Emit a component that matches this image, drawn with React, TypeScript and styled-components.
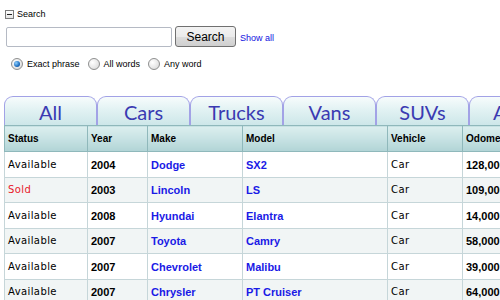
import styled, { createGlobalStyle } from "styled-components";

const GlobalStyle = createGlobalStyle`
  html, body { margin: 0; padding: 0; background: #fff; }
  body { font-family: "Liberation Sans", Arial, sans-serif; overflow: hidden; }
`;

const Page = styled.div`
  width: 500px;
  height: 300px;
  overflow: hidden;
`;

const SearchPanel = styled.div`
  display: flex;
  flex-direction: column;
  padding: 9px 0 0 5px;
`;

const TitleRow = styled.div`
  display: flex;
  align-items: center;
  gap: 3px;
  font-size: 9px;
  color: #000;
  height: 10px;
`;

const MinusBox = styled.span`
  width: 7px;
  height: 7px;
  border: 1px solid #7a7a7a;
  background: linear-gradient(#fff, #e4e4e4);
  position: relative;
  &::after {
    content: "";
    position: absolute;
    left: 1px;
    right: 1px;
    top: 3px;
    height: 1px;
    background: #222;
  }
`;

const SearchRow = styled.div`
  display: flex;
  align-items: center;
  margin-top: 7px;
  padding-left: 1px;
`;

const TextInput = styled.input`
  box-sizing: border-box;
  width: 166px;
  height: 20px;
  border: 1px solid #b5bac4;
  border-radius: 2px;
  padding: 0 3px;
  outline: none;
`;

const Button = styled.button`
  box-sizing: border-box;
  width: 61px;
  height: 21px;
  margin-left: 3px;
  border: 1px solid #707070;
  border-radius: 3px;
  background: linear-gradient(#f3f3f3 0%, #ebebeb 50%, #dddddd 51%, #cfcfcf 100%);
  font-family: "Liberation Sans", Arial, sans-serif;
  font-size: 12px;
  color: #000;
  padding: 0;
`;

const ShowAll = styled.a`
  margin-left: 4px;
  margin-top: 3px;
  font-size: 9px;
  color: #1010e0;
  text-decoration: none;
`;

const RadioRow = styled.div`
  display: flex;
  align-items: center;
  margin-top: 11px;
  padding-left: 6px;
  font-size: 9px;
`;

const RadioLabel = styled.label`
  display: flex;
  align-items: center;
  gap: 4px;
  margin-right: 8px;
`;

const RadioDot = styled.span<{ $checked?: boolean }>`
  box-sizing: border-box;
  width: 12px;
  height: 12px;
  border-radius: 50%;
  border: 1px solid #8e8f8f;
  background: radial-gradient(circle at 35% 35%, #fff 0%, #e6e6e6 60%, #cfcfcf 100%);
  display: flex;
  align-items: center;
  justify-content: center;
  &::after {
    content: "";
    display: ${(p) => (p.$checked ? "block" : "none")};
    width: 6px;
    height: 6px;
    border-radius: 50%;
    background: radial-gradient(circle at 35% 35%, #8fd0ff 0%, #1f6fc0 60%, #0b3f80 100%);
  }
`;

const TabStrip = styled.div`
  display: flex;
  margin-top: 26px;
  padding-left: 4px;
  width: 700px;
`;

const Tab = styled.div`
  box-sizing: border-box;
  flex: 0 0 auto;
  width: 93px;
  height: 29px;
  border: 1px solid #a2a2e6;
  border-bottom: none;
  border-radius: 9px 9px 0 0;
  background: linear-gradient(#f7fcfc 0%, #e2f2f3 45%, #cde7e9 100%);
  display: flex;
  align-items: center;
  justify-content: center;
  font-family: Lato, "Open Sans", sans-serif;
  font-size: 20px;
  color: #3a3ab2;
  padding-top: 2px;
`;

const TableWrap = styled.div`
  padding-left: 4px;
  width: 700px;
`;

const Table = styled.table`
  border-collapse: collapse;
  table-layout: fixed;
  font-size: 10px;
`;

const HeadCell = styled.th<{ $w: number }>`
  width: ${(p) => p.$w}px;
  box-sizing: border-box;
  height: 26px;
  padding: 0 0 0 3px;
  text-align: left;
  font-weight: bold;
  color: #000;
  border: 1px solid #8fb8bb;
  background: linear-gradient(#dcefef 0%, #c7e2e3 50%, #b1d4d6 100%);
`;

const Row = styled.tr<{ $alt?: boolean }>`
  background: ${(p) => (p.$alt ? "#f1f5f5" : "#ffffff")};
`;

type Tone = "plain" | "bold" | "link" | "sold";

const isPlain = (t: Tone) => t === "plain" || t === "sold";

const Cell = styled.td<{ $tone: Tone }>`
  height: 23.5px;
  padding: 1px 0 0 3px;
  line-height: 14px;
  vertical-align: middle;
  border: 1px solid #c6d6d9;
  border-top: none;
  font-family: ${(p) =>
    isPlain(p.$tone) ? '"DejaVu Sans", Verdana, sans-serif' : '"Liberation Sans", Arial, sans-serif'};
  font-size: ${(p) => (isPlain(p.$tone) ? "10px" : "11px")};
  letter-spacing: ${(p) => (isPlain(p.$tone) ? "0.4px" : "0")};
  font-weight: ${(p) => (isPlain(p.$tone) ? "normal" : "bold")};
  color: ${(p) => (p.$tone === "link" ? "#1a1ae6" : p.$tone === "sold" ? "#e8202a" : "#000")};
  white-space: nowrap;
  overflow: hidden;
`;

const columns = [
  { title: "Status", w: 83 },
  { title: "Year", w: 60 },
  { title: "Make", w: 95 },
  { title: "Model", w: 145 },
  { title: "Vehicle", w: 75 },
  { title: "Odometer", w: 90 },
];

const rows = [
  { status: "Available", year: "2004", make: "Dodge", model: "SX2", vehicle: "Car", odo: "128,000" },
  { status: "Sold", year: "2003", make: "Lincoln", model: "LS", vehicle: "Car", odo: "109,000" },
  { status: "Available", year: "2008", make: "Hyundai", model: "Elantra", vehicle: "Car", odo: "14,000" },
  { status: "Available", year: "2007", make: "Toyota", model: "Camry", vehicle: "Car", odo: "58,000" },
  { status: "Available", year: "2007", make: "Chevrolet", model: "Malibu", vehicle: "Car", odo: "39,000" },
  { status: "Available", year: "2007", make: "Chrysler", model: "PT Cruiser", vehicle: "Car", odo: "64,000" },
];

const tabs = ["All", "Cars", "Trucks", "Vans", "SUVs", "ATVs"];

export default function App() {
  return (
    <Page>
      <GlobalStyle />
      <SearchPanel>
        <TitleRow>
          <MinusBox />
          Search
        </TitleRow>
        <SearchRow>
          <TextInput type="text" />
          <Button type="button">Search</Button>
          <ShowAll href="#">Show all</ShowAll>
        </SearchRow>
        <RadioRow>
          <RadioLabel>
            <RadioDot $checked />
            Exact phrase
          </RadioLabel>
          <RadioLabel>
            <RadioDot />
            All words
          </RadioLabel>
          <RadioLabel>
            <RadioDot />
            Any word
          </RadioLabel>
        </RadioRow>
      </SearchPanel>
      <TabStrip>
        {tabs.map((t) => (
          <Tab key={t}>{t}</Tab>
        ))}
      </TabStrip>
      <TableWrap>
        <Table>
          <thead>
            <tr>
              {columns.map((c) => (
                <HeadCell key={c.title} $w={c.w}>
                  {c.title}
                </HeadCell>
              ))}
            </tr>
          </thead>
          <tbody>
            {rows.map((r, i) => (
              <Row key={r.make} $alt={i % 2 === 1}>
                <Cell $tone={r.status === "Sold" ? "sold" : "plain"}>{r.status}</Cell>
                <Cell $tone="bold">{r.year}</Cell>
                <Cell $tone="link">{r.make}</Cell>
                <Cell $tone="link">{r.model}</Cell>
                <Cell $tone="plain">{r.vehicle}</Cell>
                <Cell $tone="bold">{r.odo}</Cell>
              </Row>
            ))}
          </tbody>
        </Table>
      </TableWrap>
    </Page>
  );
}
